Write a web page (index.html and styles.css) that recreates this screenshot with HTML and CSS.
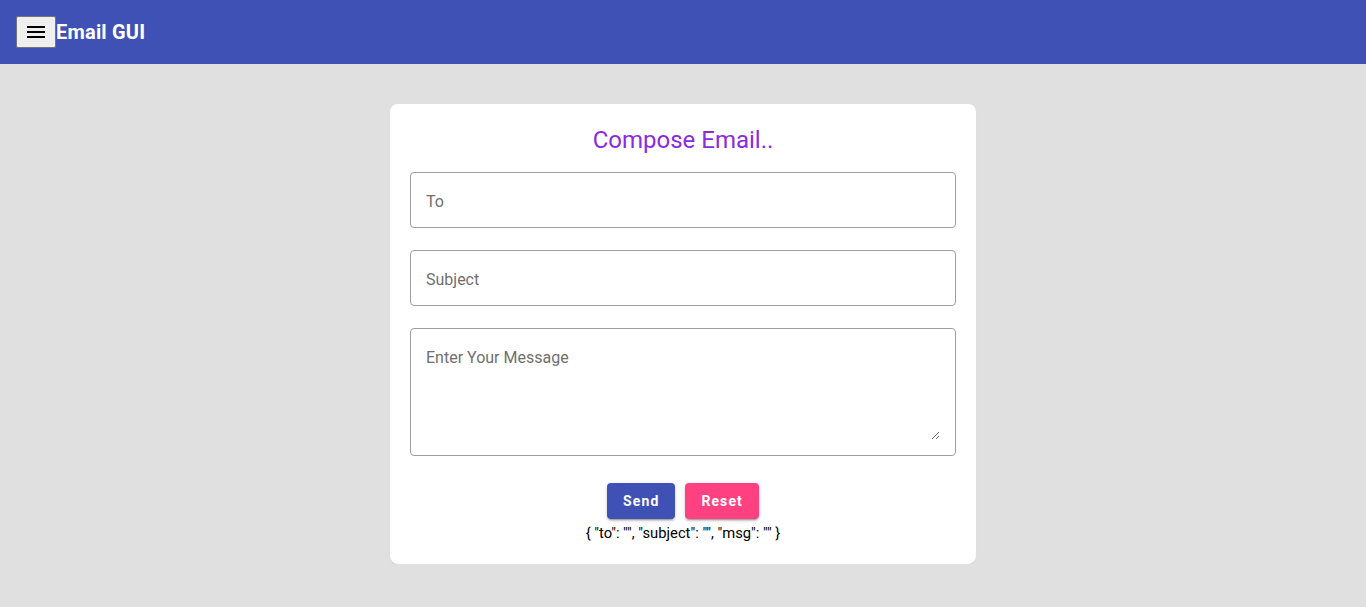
FILE: index.html
```html
<!DOCTYPE html>
<html lang="en">
<head>
<meta charset="utf-8">
<title>Email GUI</title>
<link rel="stylesheet" href="styles.css">
</head>
<body>
<header class="toolbar">
  <button class="menu-btn" type="button" aria-label="menu">
    <svg width="18" height="14" viewBox="0 0 18 14"><rect x="0" y="1" width="18" height="2" fill="#000"/><rect x="0" y="6" width="18" height="2" fill="#000"/><rect x="0" y="11" width="18" height="2" fill="#000"/></svg>
  </button>
  <span class="app-title">Email GUI</span>
</header>
<main class="page">
  <section class="card">
    <h2 class="card-title">Compose Email..</h2>
    <div class="field"><input class="control" type="text" placeholder="To"></div>
    <div class="field"><input class="control" type="text" placeholder="Subject"></div>
    <div class="field field-area"><textarea class="control area" placeholder="Enter Your Message"></textarea></div>
    <div class="actions">
      <button class="btn btn-send" type="button">Send</button>
      <button class="btn btn-reset" type="button">Reset</button>
    </div>
    <p class="json">{ "to": "", "subject": "", "msg": "" }</p>
  </section>
</main>
</body>
</html>
```
FILE: styles.css
```css
* { box-sizing: border-box; }
html, body { margin: 0; padding: 0; }
body {
  background: #e0e0e0;
  font-family: Roboto, "Helvetica Neue", sans-serif;
  color: #000;
}
.toolbar {
  height: 64px;
  background: #3f51b5;
  display: flex;
  align-items: center;
  padding: 0 16px;
}
.menu-btn {
  width: 40px;
  height: 32px;
  margin: 0;
  padding: 0;
  background: #efefef;
  border: 1px solid #767676;
  border-radius: 2px;
  display: flex;
  align-items: center;
  justify-content: center;
}
.menu-btn svg { display: block; }
.app-title {
  color: #fff;
  font-size: 20px;
  font-weight: 700;
  letter-spacing: 0.2px;
  line-height: 32px;
}
.page {
  display: flex;
  justify-content: center;
  padding-top: 40px;
}
.card {
  width: 586px;
  background: #fff;
  border-radius: 8px;
  padding: 20px 20px 21px;
  box-shadow: 0 2px 1px -1px rgba(0,0,0,.08), 0 1px 1px 0 rgba(0,0,0,.05);
}
.card-title {
  margin: 0 0 16px;
  text-align: center;
  font-size: 24px;
  font-weight: 400;
  line-height: 32px;
  color: #8a2be2;
}
.field {
  height: 56px;
  border: 1px solid #9e9e9e;
  border-radius: 4px;
  padding: 4px 15px 0;
  display: flex;
  align-items: center;
  margin-bottom: 22px;
}
.field-area {
  height: 128px;
  padding: 17px 15px 15px;
  align-items: stretch;
  margin-bottom: 27px;
}
.control {
  width: 100%;
  border: none;
  outline: none;
  padding: 0;
  margin: 0;
  font-family: Roboto, "Helvetica Neue", sans-serif;
  font-size: 16px;
  line-height: 24px;
  color: #000;
  background: transparent;
}
.control::placeholder { color: #6f6f6f; }
.area {
  height: 94px;
  resize: vertical;
  display: block;
}
.actions {
  display: flex;
  justify-content: center;
  gap: 10px;
}
.btn {
  height: 36px;
  border: none;
  border-radius: 4px;
  color: #fff;
  font-family: Roboto, "Helvetica Neue", sans-serif;
  font-size: 14px;
  font-weight: 700;
  letter-spacing: 1.1px;
  padding: 0 16px;
  box-shadow: 0 3px 1px -2px rgba(0,0,0,.2), 0 2px 2px 0 rgba(0,0,0,.14), 0 1px 5px 0 rgba(0,0,0,.12);
}
.btn-send { background: #3f51b5; }
.btn-reset { background: #ff4081; }
.json {
  margin: 4px 0 0;
  text-align: center;
  font-size: 14.75px;
  line-height: 20px;
}
```
